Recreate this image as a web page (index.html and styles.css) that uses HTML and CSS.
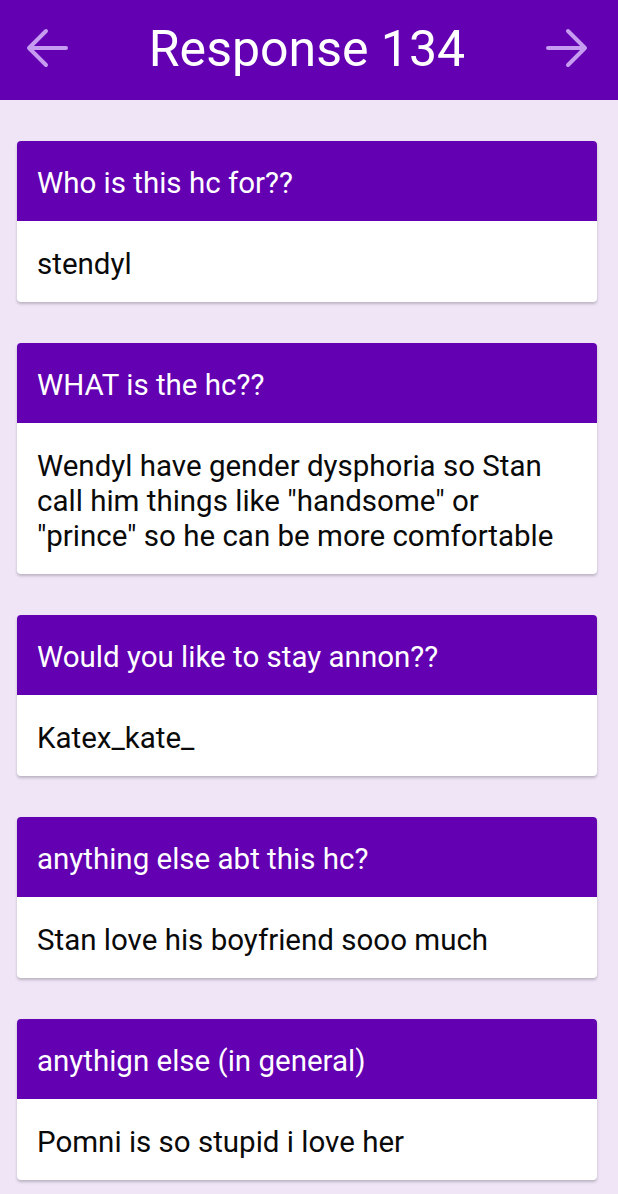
FILE: index.html
```html
<!DOCTYPE html>
<html lang="en">
<head>
    <meta charset="UTF-8">
    <meta name="viewport" content="width=device-width, initial-scale=1.0">
    <title>Response 134</title>
    <link rel="stylesheet" href="styles.css">
</head>
<body>
    <div class="topbar">
        <a href="#" class="nav-arrow" aria-label="Previous">
            <svg viewBox="0 0 44 44" width="44" height="44"><path d="M41 22H4M21 5L4 22l17 17" fill="none" stroke="currentColor" stroke-width="4" stroke-linecap="round" stroke-linejoin="round"/></svg>
        </a>
        <h1>Response 134</h1>
        <a href="#" class="nav-arrow" aria-label="Next">
            <svg viewBox="0 0 44 44" width="44" height="44"><path d="M3 22h37M23 5l17 17-17 17" fill="none" stroke="currentColor" stroke-width="4" stroke-linecap="round" stroke-linejoin="round"/></svg>
        </a>
    </div>

    <div class="answers">
        <div class="card">
            <div class="question">Who is this hc for??</div>
            <div class="answer">stendyl</div>
        </div>
        <div class="card">
            <div class="question">WHAT is the hc??</div>
            <div class="answer">Wendyl have gender dysphoria so Stan call him things like "handsome" or "prince" so he can be more comfortable</div>
        </div>
        <div class="card">
            <div class="question">Would you like to stay annon??</div>
            <div class="answer">Katex_kate_</div>
        </div>
        <div class="card">
            <div class="question">anything else abt this hc?</div>
            <div class="answer">Stan love his boyfriend sooo much</div>
        </div>
        <div class="card">
            <div class="question">anythign else (in general)</div>
            <div class="answer">Pomni is so stupid i love her</div>
        </div>
    </div>
</body>
</html>
```

FILE: styles.css
```css
body {
    margin: 0;
    font-family: Roboto, "Noto Sans", Arial, sans-serif;
    background-color: #efe5f7;
}

.topbar {
    background-color: #6200b2;
    height: 100px;
    display: flex;
    justify-content: space-between;
    align-items: center;
    padding: 0 29px 0 25px;
    box-sizing: border-box;
}
.topbar h1 {
    margin: 0 0 2px;
    color: #fff;
    font-size: 50px;
    font-weight: 400;
}
.nav-arrow {
    color: #c59cf0;
    display: flex;
    margin-bottom: 5px;
}

.answers {
    display: flex;
    flex-direction: column;
    gap: 41px;
    padding: 41px 21px 20px 17px;
}

.card {
    background-color: #fff;
    border-radius: 4px;
    overflow: hidden;
    box-shadow: 0 2px 3px rgba(0, 0, 0, 0.22);
}
.question {
    background-color: #6200b2;
    color: #fff;
    font-size: 29.5px;
    line-height: 35px;
    padding: 25px 20px 20px;
}
.answer {
    color: #0a0a0a;
    font-size: 29.5px;
    line-height: 35px;
    padding: 26px 20px 20px;
}
```
